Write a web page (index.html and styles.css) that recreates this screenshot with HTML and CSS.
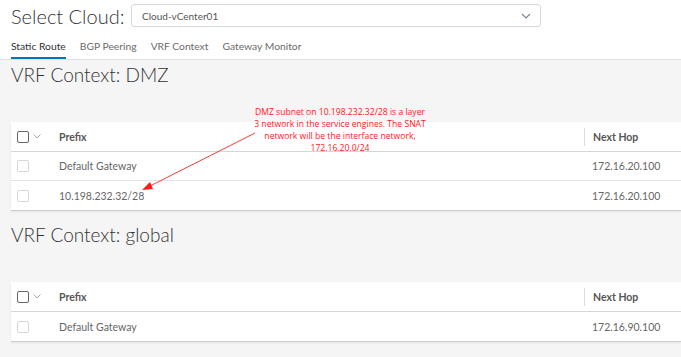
FILE: index.html
```html
<!DOCTYPE html>
<html lang="en">
<head>
    <meta charset="UTF-8">
    <title>Static Route</title>
    <link rel="stylesheet" href="styles.css">
</head>
<body>
    <div class="header">
        <div class="cloud-row">
            <h1>Select Cloud:</h1>
            <div class="select-box">
                <span>Cloud-vCenter01</span>
                <svg class="chevron" width="10" height="6" viewBox="0 0 10 6"><path d="M1 1 L5 5 L9 1" fill="none" stroke="#7a8a99" stroke-width="1.2"/></svg>
            </div>
        </div>
        <div class="tabs">
            <a class="tab active" href="#">Static Route</a>
            <a class="tab" href="#">BGP Peering</a>
            <a class="tab" href="#">VRF Context</a>
            <a class="tab" href="#">Gateway Monitor</a>
        </div>
    </div>

    <div class="content">
        <section class="vrf">
            <h2>VRF Context: DMZ</h2>
            <div class="card">
                <div class="row head">
                    <div class="cell check"><span class="box dark"></span><svg width="8" height="5" viewBox="0 0 8 5"><path d="M0.5 0.5 L4 4 L7.5 0.5" fill="none" stroke="#aaa" stroke-width="1"/></svg></div>
                    <div class="cell prefix">Prefix</div>
                    <div class="cell hop">Next Hop</div>
                </div>
                <div class="row">
                    <div class="cell check"><span class="box"></span></div>
                    <div class="cell prefix">Default Gateway</div>
                    <div class="cell hop">172.16.20.100</div>
                </div>
                <div class="row">
                    <div class="cell check"><span class="box"></span></div>
                    <div class="cell prefix">10.198.232.32/28</div>
                    <div class="cell hop">172.16.20.100</div>
                </div>
            </div>
        </section>

        <section class="vrf">
            <h2>VRF Context: global</h2>
            <div class="card">
                <div class="row head">
                    <div class="cell check"><span class="box dark"></span><svg width="8" height="5" viewBox="0 0 8 5"><path d="M0.5 0.5 L4 4 L7.5 0.5" fill="none" stroke="#aaa" stroke-width="1"/></svg></div>
                    <div class="cell prefix">Prefix</div>
                    <div class="cell hop">Next Hop</div>
                </div>
                <div class="row">
                    <div class="cell check"><span class="box"></span></div>
                    <div class="cell prefix">Default Gateway</div>
                    <div class="cell hop">172.16.90.100</div>
                </div>
            </div>
        </section>

        <!-- annotation over the first table -->
        <div class="note">DMZ subnet on 10.198.232.32/28 is a layer<br>3 network in the service engines. The SNAT<br>network will be the interface network,<br>172.16.20.0/24</div>
        <svg class="arrow" width="681" height="357" viewBox="0 0 681 357">
            <line x1="255" y1="133" x2="148" y2="187" stroke="#ff3b3b" stroke-width="1"/>
            <polygon points="142,190 150,182 153,189" fill="#ff1a1a"/>
        </svg>
    </div>
</body>
</html>
```

FILE: styles.css
```css
* {
    margin: 0;
    padding: 0;
    box-sizing: border-box;
}

body {
    font-family: Lato, 'Open Sans', sans-serif;
    background: #f5f5f5;
    color: #565656;
    width: 681px;
    height: 357px;
    overflow: hidden;
    position: relative;
}

.header {
    background: #fff;
    padding: 4px 0 0 11px;
    border-bottom: 1px solid #dde1e2;
}

.cloud-row {
    display: flex;
    align-items: center;
    gap: 12px;
    height: 23px;
}

h1 {
    font-size: 20px;
    font-weight: 300;
    color: #333;
    width: 108px;
    white-space: nowrap;
}

.select-box {
    width: 410px;
    height: 23px;
    border: 1px solid #d7d7d7;
    border-radius: 3px;
    display: flex;
    align-items: center;
    justify-content: space-between;
    padding: 0 9px 0 10px;
    font-size: 10px;
    color: #555;
}

.tabs {
    display: flex;
    gap: 14px;
    margin-top: 12px;
}

.tab {
    font-size: 10.3px;
    color: #6b6b6b;
    text-decoration: none;
    padding-top: 1px;
    border-bottom: 2px solid transparent;
    height: 20px;
}

.tab.active {
    color: #313131;
    border-bottom-color: #0079b8;
}

.content {
    padding: 3px 0 0 11px;
}

.vrf h2 {
    font-size: 19px;
    font-weight: 300;
    color: #333;
    height: 59px;
}

.vrf + .vrf {
    margin-top: 12px;
}

.card {
    background: #fff;
    border-bottom: 1px solid #ccc;
    box-shadow: 0 1px 2px rgba(0,0,0,0.08);
}

.row {
    display: flex;
    align-items: center;
    height: 29px;
    border-bottom: 1px solid #e4e4e4;
    font-size: 10.5px;
    color: #666;
}

.row:last-child {
    border-bottom: none;
}

.row.head {
    height: 30px;
    font-weight: 700;
    color: #565656;
    border-bottom: 1px solid #d6d6d6;
}

.cell.check {
    width: 48px;
    padding-left: 6px;
    display: flex;
    align-items: center;
    gap: 4px;
}

.box {
    width: 12px;
    height: 12px;
    border: 1px solid #d7d7d7;
    border-radius: 2px;
    display: block;
}

.box.dark {
    border-color: #666;
}

.cell.prefix {
    width: 525px;
}

.cell.hop {
    padding-left: 8px;
}

.head .cell.hop {
    border-left: 1px solid #ddd;
    height: 18px;
    line-height: 18px;
}

.note {
    position: absolute;
    left: 230px;
    top: 106px;
    width: 220px;
    text-align: center;
    font-family: 'Open Sans', sans-serif;
    font-size: 8.6px;
    line-height: 12px;
    color: #ff2020;
}

.arrow {
    position: absolute;
    left: 0;
    top: 0;
}
```
